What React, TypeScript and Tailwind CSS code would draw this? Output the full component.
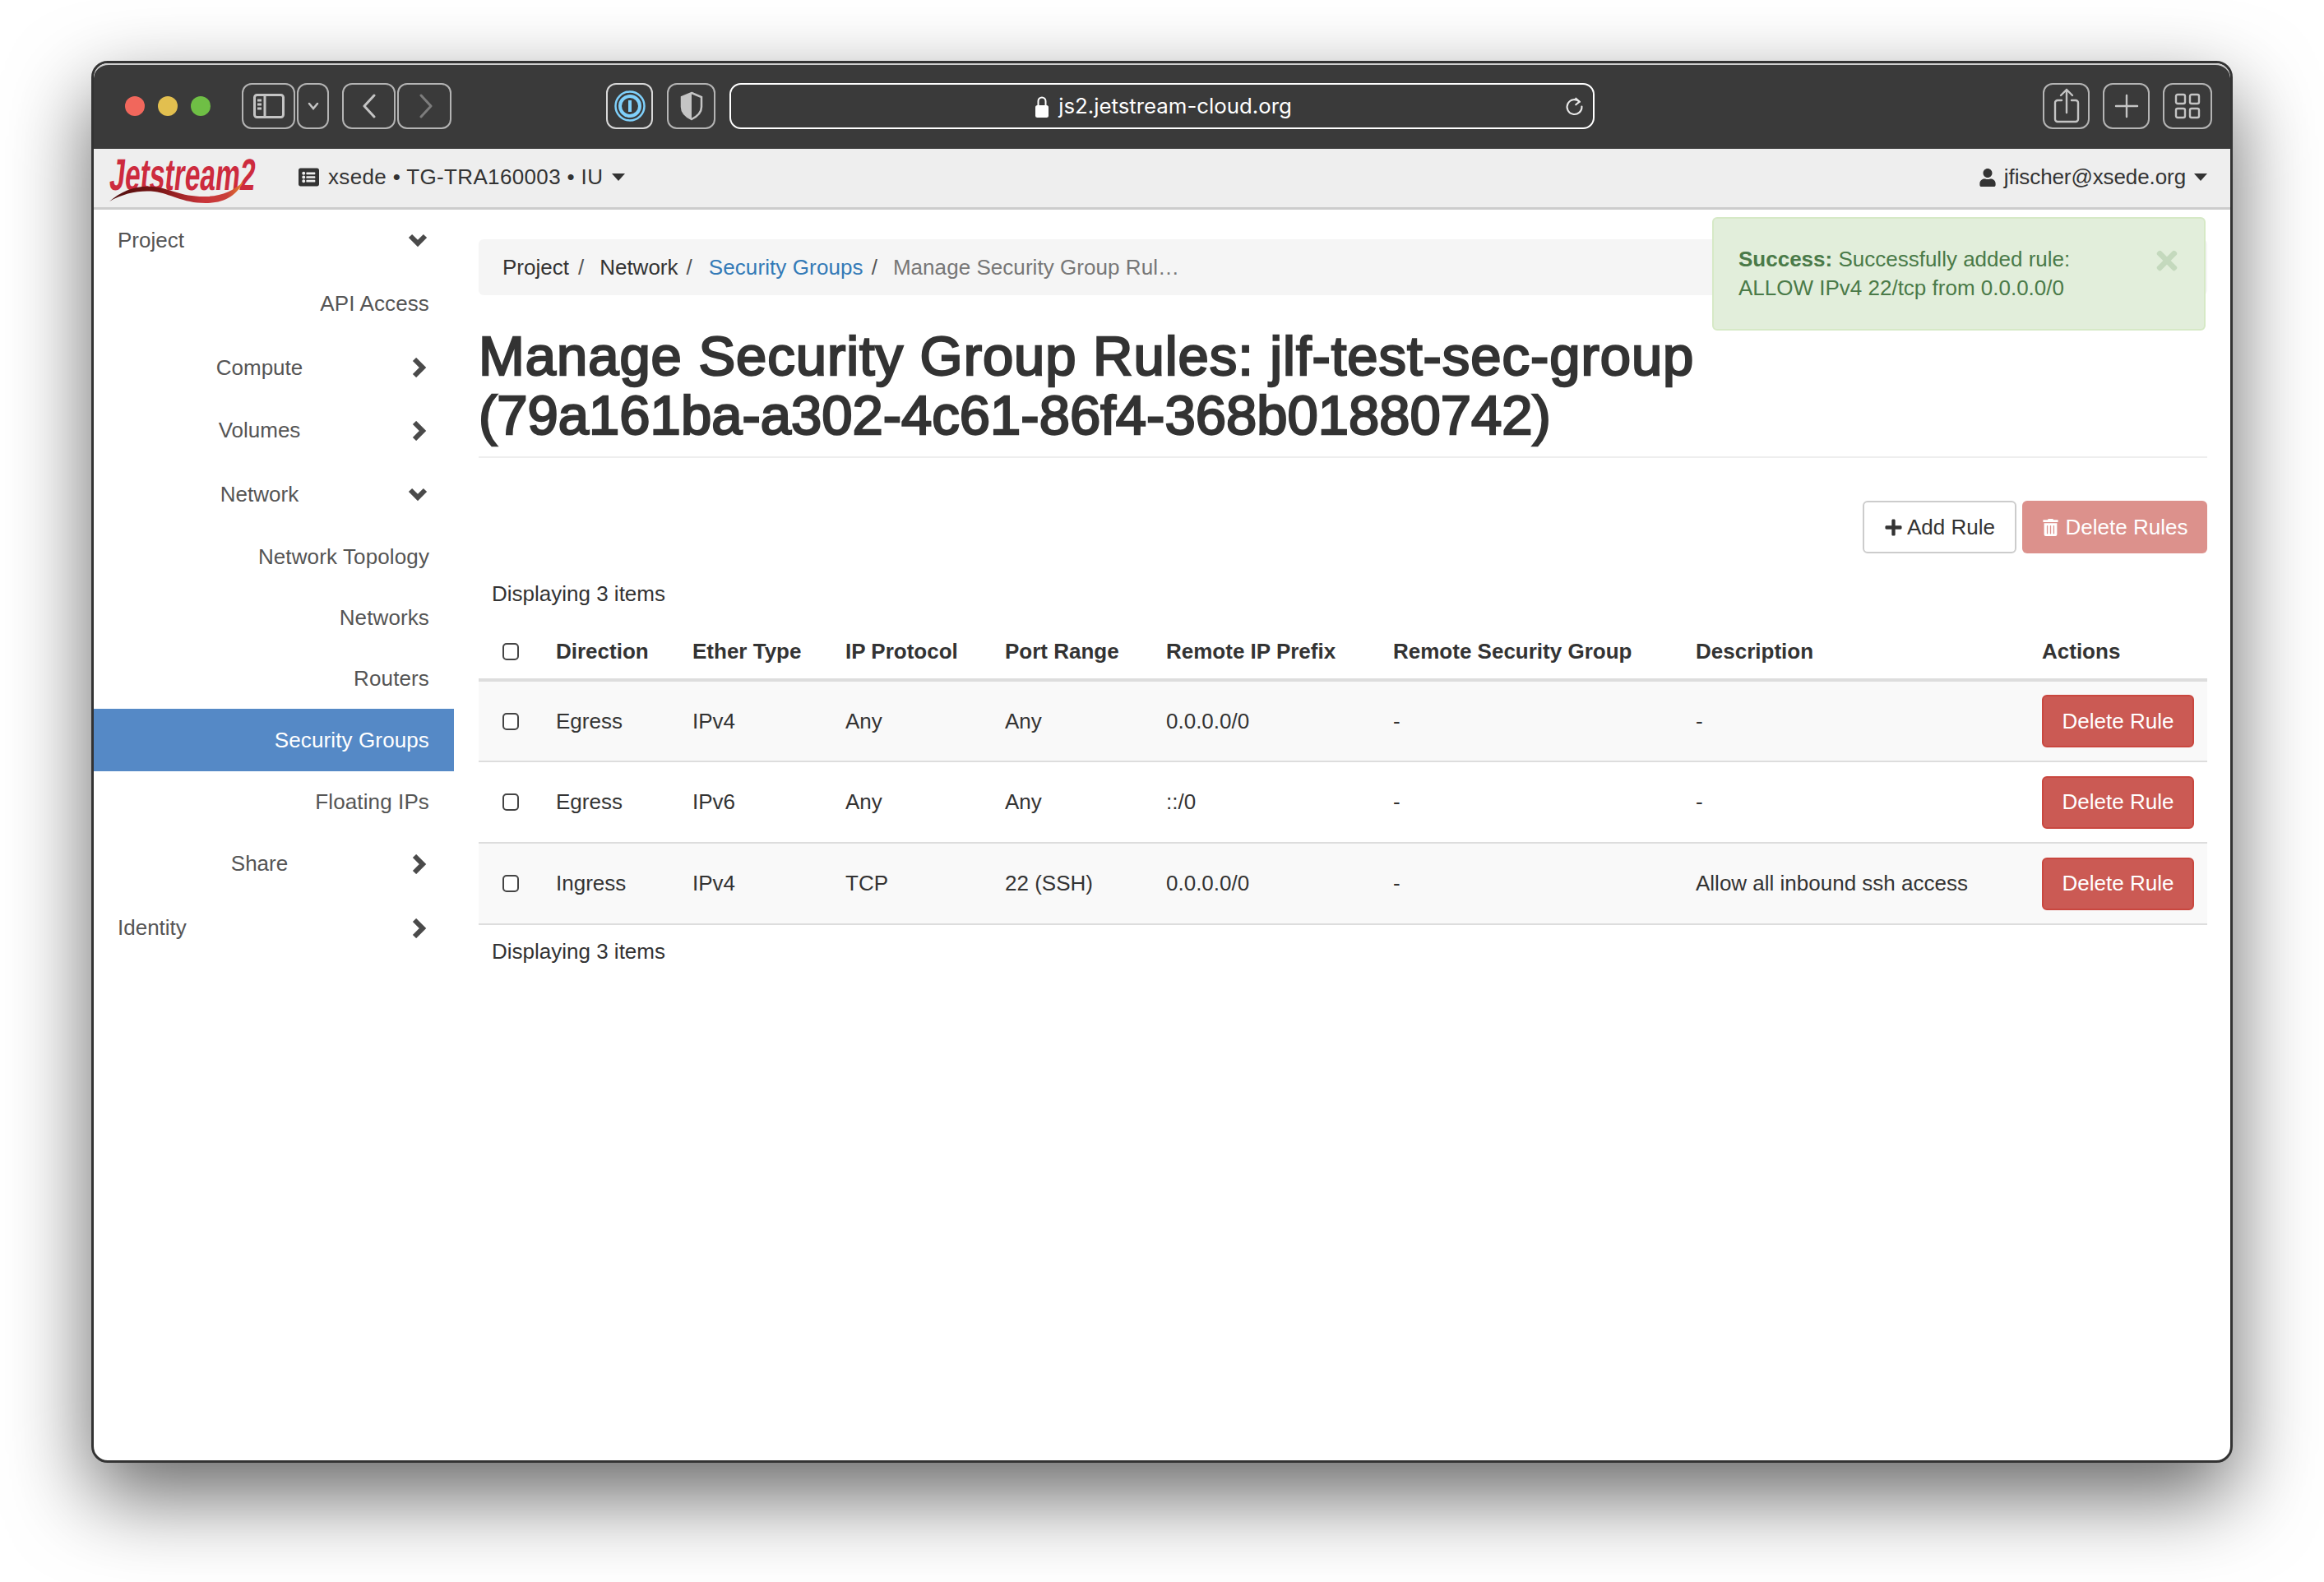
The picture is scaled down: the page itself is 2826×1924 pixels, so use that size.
import { FaListAlt, FaPlus, FaTimes, FaTrashAlt, FaUser } from "react-icons/fa";

const rows = [
  { dir: "Egress", eth: "IPv4", proto: "Any", port: "Any", ip: "0.0.0.0/0", desc: "-" },
  { dir: "Egress", eth: "IPv6", proto: "Any", port: "Any", ip: "::/0", desc: "-" },
  { dir: "Ingress", eth: "IPv4", proto: "TCP", port: "22 (SSH)", ip: "0.0.0.0/0", desc: "Allow all inbound ssh access" },
];

const heads = ["Direction", "Ether Type", "IP Protocol", "Port Range", "Remote IP Prefix", "Remote Security Group", "Description", "Actions"];

function Caret() {
  return <span className="inline-block h-0 w-0 border-x-[8px] border-t-[9px] border-x-transparent border-t-[#333]" />;
}

function Checkbox() {
  return <span className="block h-[21px] w-[20px] rounded-[5px] border-2 border-[#444] bg-white" />;
}

function Chevron({ open }: { open?: boolean }) {
  return (
    <svg className="ml-[15px] shrink-0" width="24" height="24" viewBox="0 0 24 24" fill="none" stroke="#4a4a4a" strokeWidth="6">
      <path d={open ? "M3 7l9 9 9-9" : "M8 2l10 10L8 22"} />
    </svg>
  );
}

function ToolButton({ className, children }: { className: string; children: React.ReactNode }) {
  return (
    <div className={`flex h-[56px] items-center justify-center rounded-[12px] border-2 border-[#b4b4b4] ${className}`}>
      {children}
    </div>
  );
}

function TitleBar() {
  return (
    <div className="flex h-[104px] items-center rounded-t-[18px] border-t-2 border-[#cfcfcf] bg-[#3a3a3a] pb-[3px] pl-[38px] pr-[22px]">
      <span className="h-[24px] w-[24px] rounded-full bg-[#f1675c]" />
      <span className="ml-[16px] h-[24px] w-[24px] rounded-full bg-[#e2bf4f]" />
      <span className="ml-[16px] h-[24px] w-[24px] rounded-full bg-[#6fbf45]" />
      <ToolButton className="ml-[38px] w-[65px]">
        <svg width="38" height="30" viewBox="0 0 38 30" fill="none" stroke="#c4c4c4" strokeWidth="3">
          <rect x="1.5" y="1.5" width="35" height="27" rx="3" />
          <path d="M14 2v26M5 8h5M5 13h5M5 18h5" />
        </svg>
      </ToolButton>
      <ToolButton className="ml-[2px] w-[39px]">
        <svg width="14" height="10" viewBox="0 0 14 10" fill="none" stroke="#c4c4c4" strokeWidth="2.5" strokeLinecap="round">
          <path d="M2 2l5 6 5-6" />
        </svg>
      </ToolButton>
      <ToolButton className="ml-[16px] w-[65px]">
        <svg width="18" height="30" viewBox="0 0 18 30" fill="none" stroke="#c4c4c4" strokeWidth="3" strokeLinecap="round" strokeLinejoin="round">
          <path d="M15 2L3 15l12 13" />
        </svg>
      </ToolButton>
      <ToolButton className="ml-[2px] w-[66px] pl-[4px]">
        <svg width="18" height="30" viewBox="0 0 18 30" fill="none" stroke="#7c7c7c" strokeWidth="3" strokeLinecap="round" strokeLinejoin="round">
          <path d="M3 2l12 13L3 28" />
        </svg>
      </ToolButton>
      <ToolButton className="ml-[188px] w-[57px] border-[#d8d8d8]">
        <svg width="38" height="38" viewBox="0 0 38 38" fill="none" stroke="#7fd0fb">
          <circle cx="19" cy="19" r="17.5" strokeWidth="2.5" />
          <circle cx="19" cy="19" r="12" strokeWidth="4" />
          <path d="M19 12v14" strokeWidth="4" />
        </svg>
      </ToolButton>
      <ToolButton className="ml-[17px] w-[59px]">
        <svg width="28" height="36" viewBox="0 0 28 36" fill="none">
          <path d="M14 2l12 5v12c0 7-6 12-12 15C8 31 2 26 2 19V7z" stroke="#c4c4c4" strokeWidth="2.5" />
          <path d="M14 2L2 7v12c0 7 6 12 12 15z" fill="#c4c4c4" />
        </svg>
      </ToolButton>
      <div className="relative ml-[17px] flex h-[56px] w-[1052px] items-center justify-center rounded-[14px] border-2 border-white pl-[4px] pt-[2px] font-['Inter',sans-serif] text-[25.8px] text-white">
        <svg className="mr-[12px]" width="16" height="28" viewBox="0 0 16 28">
          <path d="M3.5 13V7a4.5 4.5 0 0 1 9 0v6" fill="none" stroke="#fff" strokeWidth="2" />
          <rect x="0" y="12" width="16" height="15" rx="2.5" fill="#fff" />
        </svg>
        js2.jetstream-cloud.org
        <svg className="absolute right-[10px]" width="25" height="25" viewBox="0 0 28 28" fill="none" stroke="#e8e8e8" strokeWidth="2.4" strokeLinecap="round">
          <path d="M21 7.5A10 10 0 1 0 24 14" />
          <path d="M16 3l5 4.5-5 4" strokeLinejoin="round" />
        </svg>
      </div>
      <div className="flex-1" />
      <ToolButton className="w-[57px]">
        <svg width="32" height="44" viewBox="0 0 32 44" fill="none" stroke="#c4c4c4" strokeWidth="2.4" strokeLinecap="round" strokeLinejoin="round">
          <path d="M10 15H5a3 3 0 0 0-3 3v20a3 3 0 0 0 3 3h22a3 3 0 0 0 3-3V18a3 3 0 0 0-3-3h-5" />
          <path d="M16 30V2M9 9l7-7 7 7" />
        </svg>
      </ToolButton>
      <ToolButton className="ml-[16px] w-[57px]">
        <svg width="30" height="30" viewBox="0 0 30 30" stroke="#c4c4c4" strokeWidth="2.4" strokeLinecap="round">
          <path d="M15 2v26M2 15h26" />
        </svg>
      </ToolButton>
      <ToolButton className="ml-[16px] w-[60px]">
        <svg width="32" height="32" viewBox="0 0 32 32" fill="none" stroke="#c4c4c4" strokeWidth="2.4">
          <rect x="2" y="2" width="11" height="11" rx="2" />
          <rect x="19" y="2" width="11" height="11" rx="2" />
          <rect x="2" y="19" width="11" height="11" rx="2" />
          <rect x="19" y="19" width="11" height="11" rx="2" />
        </svg>
      </ToolButton>
    </div>
  );
}

function Logo() {
  return (
    <div className="relative h-[56px] w-[182px]">
      <span className="absolute left-[2px] top-[-16px] origin-left -skew-x-[10deg] scale-x-[0.62] whitespace-nowrap font-['Liberation_Sans',sans-serif] text-[54px] font-bold text-[#cd2b3e]">
        Jetstream2
      </span>
      <svg className="absolute left-0 top-[31px]" width="180" height="30" viewBox="0 0 180 30">
        <defs>
          <linearGradient id="swoosh" x1="0" x2="1" y1="0" y2="0">
            <stop offset="0" stopColor="#4f1010" />
            <stop offset="0.35" stopColor="#761414" />
            <stop offset="0.7" stopColor="#c9343a" />
            <stop offset="0.88" stopColor="#c9403a" />
            <stop offset="1" stopColor="#e8832c" />
          </linearGradient>
        </defs>
        <path d="M1 26C16 13 34 6 54 8c22 2 34 13 66 12 18-1 32-7 44-18-8 16-22 26-46 26-28 0-44-12-62-14C38 12 18 16 1 26z" fill="url(#swoosh)" />
      </svg>
    </div>
  );
}

function NavBar() {
  return (
    <div className="flex h-[74px] items-center border-b-[3px] border-[#cccccc] bg-[#eeeeee] pb-[2px] pl-[18px] pr-[28px] text-[26px] text-[#333]">
      <Logo />
      <FaListAlt className="ml-[49px] text-[25px] text-[#333]" />
      <span className="ml-[11px] tracking-[0.35px]">xsede • TG-TRA160003 • IU</span>
      <span className="ml-[11px] flex"><Caret /></span>
      <div className="flex-1" />
      <FaUser className="text-[22px] text-[#333]" />
      <span className="ml-[9px] tracking-[-0.1px]">jfischer@xsede.org</span>
      <span className="ml-[10px] flex"><Caret /></span>
    </div>
  );
}

function NavGroup({ label, open, left, h }: { label: string; open?: boolean; left?: boolean; h: string }) {
  return (
    <div className={`flex items-center pl-[29px] pr-[32px] text-[#555] ${h}`}>
      <span className={`flex-1 ${left ? "text-left" : "pl-[7px] text-center"}`}>{label}</span>
      <Chevron open={open} />
    </div>
  );
}

function NavItem({ label, active, h = "h-[74px]" }: { label: string; active?: boolean; h?: string }) {
  return (
    <div className={`flex items-center justify-end pr-[30px] tracking-[0.12px] ${h} ${active ? "bg-[#5589c6] text-white" : "text-[#555]"}`}>
      {label}
    </div>
  );
}

function Sidebar() {
  return (
    <div className="w-[438px] shrink-0 text-[26px]">
      <NavGroup label="Project" open left h="h-[74px]" />
      <NavItem label="API Access" h="h-[80px]" />
      <NavGroup label="Compute" h="h-[76px]" />
      <NavGroup label="Volumes" h="h-[77px]" />
      <NavGroup label="Network" open h="h-[78px]" />
      <NavItem label="Network Topology" />
      <NavItem label="Networks" />
      <NavItem label="Routers" />
      <NavItem label="Security Groups" active h="h-[76px]" />
      <NavItem label="Floating IPs" />
      <NavGroup label="Share" h="h-[77px]" />
      <NavGroup label="Identity" left h="h-[79px]" />
    </div>
  );
}

function Breadcrumb() {
  return (
    <div className="flex h-[68px] items-center rounded-[6px] bg-[#f5f5f5] pl-[29px] text-[26px] text-[#333]">
      <span>Project</span>
      <span className="ml-[11px] text-[#555]">/</span>
      <span className="ml-[19px]">Network</span>
      <span className="ml-[10px] text-[#555]">/</span>
      <span className="ml-[20px] tracking-[0.1px] text-[#337ab7]">Security Groups</span>
      <span className="ml-[10px] text-[#555]">/</span>
      <span className="ml-[19px] tracking-[0.05px] text-[#777]">Manage Security Group Rul…</span>
    </div>
  );
}

function RulesTable() {
  return (
    <table className="w-full table-fixed border-collapse text-[26px] text-[#333]">
      <colgroup>
        <col className="w-[78px]" />
        <col className="w-[166px]" />
        <col className="w-[186px]" />
        <col className="w-[194px]" />
        <col className="w-[196px]" />
        <col className="w-[276px]" />
        <col className="w-[368px]" />
        <col className="w-[421px]" />
        <col className="w-[217px]" />
      </colgroup>
      <thead>
        <tr className="h-[68px] border-b-4 border-[#dddddd]">
          <th className="pl-[29px]"><Checkbox /></th>
          {heads.map((h) => (
            <th className="pl-[16px] text-left font-bold" key={h}>{h}</th>
          ))}
        </tr>
      </thead>
      <tbody>
        {rows.map((r, i) => (
          <tr className={`h-[99px] border-b-2 border-[#dddddd] ${i % 2 === 0 ? "bg-[#f9f9f9]" : "bg-white"}`} key={i}>
            <td className="pl-[29px]"><Checkbox /></td>
            <td className="pl-[16px]">{r.dir}</td>
            <td className="pl-[16px]">{r.eth}</td>
            <td className="pl-[16px]">{r.proto}</td>
            <td className="pl-[16px]">{r.port}</td>
            <td className="pl-[16px]">{r.ip}</td>
            <td className="pl-[16px]">-</td>
            <td className="whitespace-nowrap pl-[16px]">{r.desc}</td>
            <td className="pl-[16px]">
              <button className="h-[64px] w-[185px] rounded-[6px] border-2 border-[#c9473f] bg-[#cb5a54] text-white" type="button">
                Delete Rule
              </button>
            </td>
          </tr>
        ))}
      </tbody>
    </table>
  );
}

function Main() {
  return (
    <div className="relative w-[2102px] pt-[36px]">
      <Breadcrumb />
      <div className="absolute right-[2px] top-[9px] h-[138px] w-[600px] rounded-[6px] border-2 border-[#d6e9c6] bg-[#e2eedb] px-[30px] pt-[32px] text-[26px] leading-[35px] text-[#4a7a48]">
        <b>Success:</b> Successfully added rule:
        <br />
        ALLOW IPv4 22/tcp from 0.0.0.0/0
        <FaTimes className="absolute right-[27px] top-[33px] text-[36px] text-[#c4d9bd]" />
      </div>
      <h1 className="mt-[38px] border-b-2 border-[#eeeeee] pb-[14px] text-[67px] leading-[72px] text-[#333] [-webkit-text-stroke:2.4px_#333]">
        <span className="tracking-[0.95px]">Manage Security Group Rules: jlf-test-sec-group</span>
        <br />
        (79a161ba-a302-4c61-86f4-368b01880742)
      </h1>
      <div className="mt-[52px] flex justify-end gap-[7px] text-[26px]">
        <button className="flex h-[64px] w-[187px] items-center justify-center gap-[5px] rounded-[6px] border-2 border-[#cccccc] bg-white text-[#333]" type="button">
          <FaPlus className="text-[23px]" /> Add Rule
        </button>
        <button className="flex h-[64px] w-[225px] items-center justify-center gap-[8px] rounded-[6px] bg-[#dc918c] text-white" type="button">
          <FaTrashAlt className="text-[21px]" /> Delete Rules
        </button>
      </div>
      <div className="mt-[33px] pl-[16px] text-[26px] leading-[32px] text-[#333]">Displaying 3 items</div>
      <div className="mt-[21px]"><RulesTable /></div>
      <div className="mt-[16px] pl-[16px] text-[26px] leading-[32px] text-[#333]">Displaying 3 items</div>
    </div>
  );
}

export default function App() {
  return (
    <div className="h-[1924px] w-[2826px] overflow-hidden bg-white pl-[111px] pt-[74px] font-['Liberation_Sans',sans-serif]">
      <div className="h-[1705px] w-[2604px] overflow-hidden rounded-[20px] border-[3px] border-[#333333] bg-white shadow-[0_40px_100px_rgba(0,0,0,0.6)]">
        <TitleBar />
        <NavBar />
        <div className="flex">
          <Sidebar />
          <div className="w-[30px] shrink-0" />
          <Main />
        </div>
      </div>
    </div>
  );
}
